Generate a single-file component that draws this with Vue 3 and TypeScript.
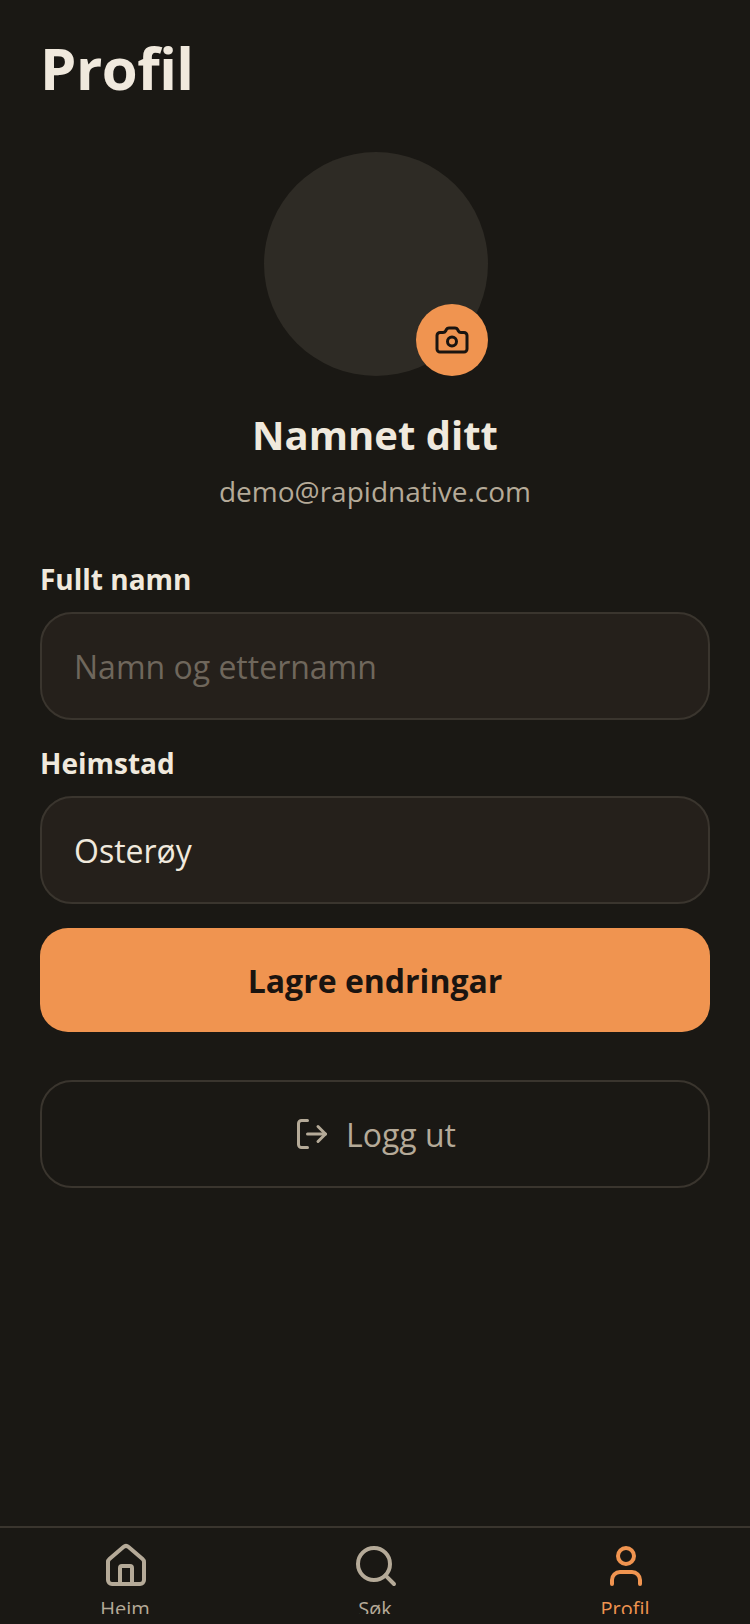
<script setup lang="ts">
const tabs = [
  { label: 'Heim', active: false, kind: 'home' },
  { label: 'Søk', active: false, kind: 'search' },
  { label: 'Profil', active: true, kind: 'user' },
]
</script>

<template>
  <div class="page">
    <main class="main">
      <h1 class="title">Profil</h1>
      <section class="hero">
        <div class="avatar">
          <div class="badge">
            <svg width="36" height="36" viewBox="0 0 24 24" fill="none" stroke="#1a1410" stroke-width="2" stroke-linecap="round" stroke-linejoin="round">
              <path d="M13.997 4a2 2 0 0 1 1.76 1.05l.486.9A2 2 0 0 0 18.003 7H20a2 2 0 0 1 2 2v9a2 2 0 0 1-2 2H4a2 2 0 0 1-2-2V9a2 2 0 0 1 2-2h1.997a2 2 0 0 0 1.759-1.048l.489-.904A2 2 0 0 1 10.004 4z" />
              <circle cx="12" cy="13" r="3" />
            </svg>
          </div>
        </div>
        <div class="name">Namnet ditt</div>
        <div class="email">demo@rapidnative.com</div>
      </section>
      <label class="label first">Fullt namn</label>
      <div class="field placeholder">Namn og etternamn</div>
      <label class="label second">Heimstad</label>
      <div class="field">Osterøy</div>
      <button class="save">Lagre endringar</button>
      <button class="logout">
        <svg width="36" height="36" viewBox="0 0 24 24" fill="none" stroke="#b5aa98" stroke-width="2" stroke-linecap="round" stroke-linejoin="round">
          <path d="M9 21H5a2 2 0 0 1-2-2V5a2 2 0 0 1 2-2h4" />
          <path d="m16 17 5-5-5-5" />
          <path d="M21 12H9" />
        </svg>
        <span>Logg ut</span>
      </button>
    </main>
    <nav class="tabs">
      <div v-for="t in tabs" :key="t.label" class="tab" :class="{ active: t.active }">
        <svg width="48" height="48" viewBox="0 0 24 24" fill="none" stroke="currentColor" stroke-width="2" stroke-linecap="round" stroke-linejoin="round">
          <template v-if="t.kind === 'home'">
            <path d="M3 10a2 2 0 0 1 .709-1.528l7-5.999a2 2 0 0 1 2.582 0l7 5.999A2 2 0 0 1 21 10v9a2 2 0 0 1-2 2H5a2 2 0 0 1-2-2z" />
            <path d="M15 21v-8a1 1 0 0 0-1-1h-4a1 1 0 0 0-1 1v8" />
          </template>
          <template v-else-if="t.kind === 'search'">
            <circle cx="11" cy="11" r="8" />
            <path d="m21 21-4.3-4.3" />
          </template>
          <template v-else>
            <path d="M19 21v-2a4 4 0 0 0-4-4H9a4 4 0 0 0-4 4v2" />
            <circle cx="12" cy="7" r="4" />
          </template>
        </svg>
        <span class="tab-label">{{ t.label }}</span>
      </div>
    </nav>
  </div>
</template>

<style>
html, body { margin: 0; background: #1a1814; }
</style>

<style scoped>
.page {
  width: 750px;
  height: 1624px;
  background: #1a1814;
  display: flex;
  flex-direction: column;
  overflow: hidden;
  font-family: "Open Sans", sans-serif;
  color: #f0e9dd;
}
.main { flex: 1; padding: 0 40px; display: flex; flex-direction: column; }
.title { margin: 28px 0 0; font-size: 58px; line-height: 80px; font-weight: 700; letter-spacing: -0.5px; }
.hero { display: flex; flex-direction: column; align-items: center; margin-top: 44px; }
.avatar { width: 224px; height: 224px; border-radius: 50%; background: #2e2b25; position: relative; margin-left: 2px; }
.badge {
  position: absolute; right: 0; bottom: 0;
  width: 72px; height: 72px; border-radius: 50%;
  background: #f09450;
  display: flex; align-items: center; justify-content: center;
}
.name { margin-top: 31px; font-size: 40px; line-height: 56px; font-weight: 700; }
.email { margin-top: 8px; font-size: 28px; line-height: 40px; color: #b5aa98; }
.label { font-size: 28px; line-height: 40px; font-weight: 700; }
.label.first { margin-top: 48px; }
.label.second { margin-top: 23px; }
.field {
  margin-top: 13px;
  height: 108px; box-sizing: border-box;
  border: 2px solid #3a352e; border-radius: 32px;
  background: #25201b;
  padding: 0 32px;
  display: flex; align-items: center;
  font-size: 32px;
}
.placeholder { color: #6f675c; }
.save {
  margin-top: 24px; height: 104px; border: 0; border-radius: 28px;
  background: #f09450; color: #1a1410;
  font: 700 32px "Open Sans", sans-serif;
}
.logout {
  margin-top: 48px; height: 108px; box-sizing: border-box;
  border: 2px solid #3a352e; border-radius: 32px; background: transparent;
  color: #b5aa98; font: 400 32px "Open Sans", sans-serif;
  display: flex; align-items: center; justify-content: center; gap: 16px;
}
.tabs {
  height: 96px;
  border-top: 2px solid #3a352e;
  display: flex;
}
.tab {
  flex: 1; height: 86px; overflow: hidden;
  display: flex; flex-direction: column; align-items: center;
  padding-top: 14px; box-sizing: border-box;
  color: #b5aa98;
}
.tab svg { flex: none; margin-left: 2px; }
.tab.active { color: #f09450; }
.tab-label { flex: none; font-size: 20px; line-height: 28px; margin-top: 5px; }
</style>
